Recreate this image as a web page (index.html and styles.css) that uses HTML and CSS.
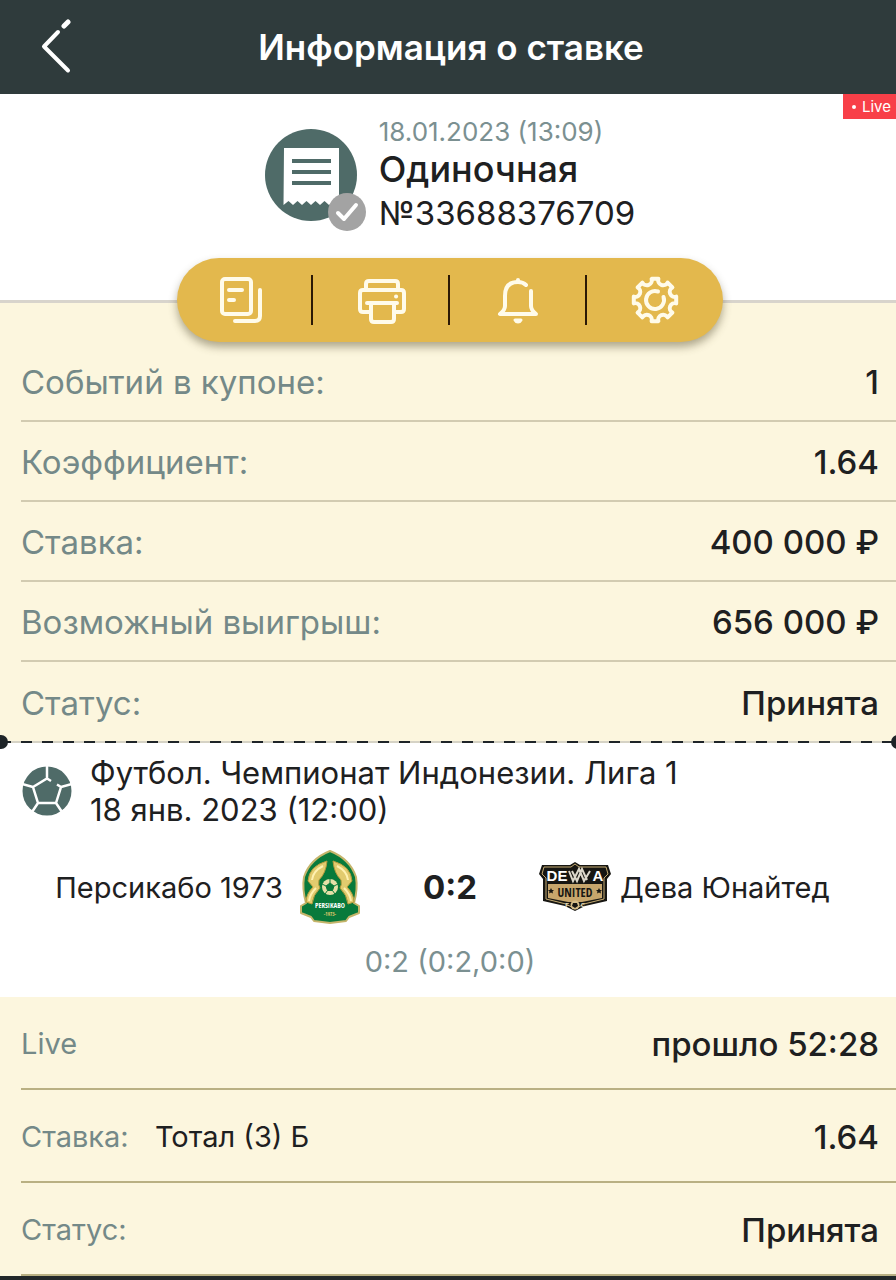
FILE: index.html
```html
<!DOCTYPE html>
<html lang="ru">
<head>
<meta charset="utf-8">
<meta name="viewport" content="width=device-width, initial-scale=1">
<title>Информация о ставке</title>
<link rel="stylesheet" href="styles.css">
</head>
<body>
<header class="topbar">
  <button class="back" type="button" aria-label="Назад">
    <svg width="32" height="56" viewBox="0 0 32 56" fill="none" stroke="#fff" stroke-width="4" stroke-linecap="round" stroke-linejoin="round"><path d="M28 3l-4 4" stroke-width="5"/><path d="M18 13L4 27.500l24 24"/></svg>
  </button>
  <h1 class="topbar-title">Информация о ставке</h1>
  <span class="topbar-side"></span>
</header>

<main>
  <section class="summary">
    <span class="live-tag"><i class="live-dot"></i>Live</span>
    <div class="ticket">
      <svg class="ticket-icon" width="102" height="102" viewBox="0 0 102 102">
        <circle cx="46" cy="46" r="46" fill="#4f6b68"/>
        <path d="M19 19h55v58l-5-5-5 4-4.500-4-4.500 4-4.500-4-4.500 4-4.500-4-4.500 4-4.500-4-4.500 4-4.500-4-5 4z" fill="#fff"/>
        <path d="M27 32h39M27 43h39M27 54h39" stroke="#4f6b68" stroke-width="4"/>
        <circle cx="82" cy="83" r="19" fill="#a3a3a3"/>
        <path d="M73 84l6 6 12-14" fill="none" stroke="#fff" stroke-width="4" stroke-linecap="round" stroke-linejoin="round"/>
      </svg>
      <div class="ticket-text">
        <time class="ticket-date">18.01.2023 (13:09)</time>
        <h2 class="ticket-type">Одиночная</h2>
        <p class="ticket-number">№33688376709</p>
      </div>
    </div>
    <div class="actions">
      <button class="action" type="button" aria-label="Копировать">
        <svg width="48" height="48" viewBox="4 0 48 48" overflow="visible" fill="none" stroke="#fffbea" stroke-width="4" stroke-linecap="round" stroke-linejoin="round"><rect x="5" y="3" width="29" height="35" rx="3"/><path d="M12 14h13M12 24h5"/><path d="M43 14v26q0 5-5 5H18"/></svg>
      </button>
      <button class="action" type="button" aria-label="Печать">
        <svg width="48" height="48" viewBox="0 0 48 48" fill="none" stroke="#fffbea" stroke-width="4" stroke-linecap="round" stroke-linejoin="round"><path d="M8 14V8q0-3 3-3h26q3 0 3 3v6"/><path d="M12 36H5q-3 0-3-3V17q0-3 3-3h38q3 0 3 3v16q0 3-3 3h-7"/><path d="M9 27h30M13 27v16q0 3 3 3h17q3 0 3-3V27"/><path d="M38 20.500h.1"/></svg>
      </button>
      <button class="action" type="button" aria-label="Уведомления">
        <svg width="48" height="48" viewBox="0 0 48 48" fill="none" stroke="#fffbea" stroke-width="4" stroke-linecap="round" stroke-linejoin="round"><path d="M32 9Q29 6 24 6 11 6 11 20v10q0 4-5 8h36q-5-4-5-8V15"/><path d="M24 6V4"/><path d="M21 44h6q-1 2-3 2t-3-2z" stroke-width="3"/></svg>
      </button>
      <button class="action" type="button" aria-label="Настройки">
        <svg width="48" height="48" viewBox="-24 -24 48 48" fill="none" stroke="#fffbea" stroke-width="4" stroke-linecap="round" stroke-linejoin="round"><path d="M-3.400-21.200H3.400A5 5 0 0 0 12.600-17.400L17.400-12.600A5 5 0 0 0 21.200-3.400V3.400A5 5 0 0 0 17.400 12.600L12.600 17.400A5 5 0 0 0 3.400 21.200H-3.400A5 5 0 0 0-12.600 17.400L-17.400 12.600A5 5 0 0 0-21.200 3.400V-3.400A5 5 0 0 0-17.400-12.600L-12.600-17.400A5 5 0 0 0-3.400-21.200z"/><path d="M3-8.500A9 9 0 1 0 8.500-3"/></svg>
      </button>
    </div>
  </section>

  <dl class="details">
    <div class="row"><dt>Событий в купоне:</dt><dd>1</dd></div>
    <div class="row"><dt>Коэффициент:</dt><dd>1.64</dd></div>
    <div class="row"><dt>Ставка:</dt><dd>400 000 ₽</dd></div>
    <div class="row"><dt>Возможный выигрыш:</dt><dd>656 000 ₽</dd></div>
    <div class="row"><dt>Статус:</dt><dd>Принята</dd></div>
  </dl>

  <div class="tear"></div>

  <section class="event">
    <div class="event-head">
      <svg class="ball" width="50" height="50" viewBox="0 0 50 50">
        <circle cx="25" cy="25" r="24.500" fill="#4f6b68"/>
        <path d="M25 0v13M11 21L0 18M39 21l11-3M16 37l-6 9M34 37l6 9M29 15l-4-2.500L11 21l5 16h18l5-16-4-2.500" fill="none" stroke="#fff" stroke-width="2.500"/>
      </svg>
      <div class="event-text">
        <p>Футбол. Чемпионат Индонезии. Лига 1</p>
        <p>18 янв. 2023 (12:00)</p>
      </div>
    </div>
    <div class="match">
      <div class="team team-home">
        <span>Персикабо 1973</span>
        <svg width="64" height="76" viewBox="0 0 64 76">
          <path d="M32 2Q52 10 58 28q2 12-2 26l5 3v7l-10 4-3 4-16 2-16-2-3-4-10-4v-7l5-3Q4 40 6 28 12 10 32 2z" fill="#087a3b" stroke="#c5b56b" stroke-width="2" stroke-linejoin="round"/>
          <path d="M29 12Q11 17 10 32l5 6q-7 7-7 15l6 2q1-9 8-16-2-3-1-8 7-7 8-19z" fill="#e2cb6e" stroke="#b59b3d"/>
          <path d="M35 12q18 5 19 20l-5 6q7 7 7 15l-6 2q-1-9-8-16 2-3 1-8-7-7-8-19z" fill="#e2cb6e" stroke="#b59b3d"/>
          <path d="M14 31q1-9 11-14M50 31q-1-9-11-14M11 52q1-7 7-13M53 52q-1-7-7-13" fill="none" stroke="#fff1b0" stroke-width="2"/>
          <circle cx="32" cy="38" r="8" fill="#e5e0a8"/>
          <path d="M32 34l4 3-1.500 4.500h-5L28 37zM32 30v4M36 37l4-2M34.500 41.500L37 45M29.500 41.500L27 45M28 37l-4-2" fill="#087a3b" stroke="#087a3b"/>
          <text class="logo-text" x="32" y="59" font-size="7" fill="#fff">PERSIKABO</text>
          <text class="logo-text" x="32" y="67" font-size="5" fill="#e2cb6e">-1973-</text>
        </svg>
      </div>
      <strong class="score">0:2</strong>
      <div class="team team-away">
        <svg width="74" height="50" viewBox="0 0 74 50">
          <path d="M4 3h28l5-3 5 3h28l3 9-4 5v22l-22 5-10 5-10-5-22-5V17l-4-5z" fill="#171612"/>
          <path d="M6 5h27l4-3 4 3h27l2 7-4 4v21l-20 5-9 5-9-5-20-5V16l-4-4z" fill="none" stroke="#c5ab72"/>
          <path d="M10 22h54v14l-20 4H30l-20-4z" fill="#c7a66c"/>
          <text class="logo-wide" x="19" y="19" font-size="15" fill="#fff">DE</text>
          <text class="logo-wide" x="60" y="19" font-size="15" fill="#fff">A</text>
          <path d="M31 9l4 10 6-12 5 12 6-10M34 9l5 10 5-12 5 11" fill="none" stroke="#ddd8cb" stroke-width="2"/>
          <text class="logo-text" x="37" y="35" font-size="12" fill="#171612">UNITED</text>
          <path d="M13 26l1 2h2l-1.500 1.500.5 2-2-1-2 1 .5-2L10 28h2zM61 26l1 2h2l-1.500 1.500.5 2-2-1-2 1 .5-2L58 28h2z" fill="#171612"/>
          <circle cx="37" cy="43" r="4.500" fill="#d5bd89"/><path d="M35 41h4l1 3-3 2-3-2z" fill="#171612"/>
          <text class="logo-wide" x="29" y="45" font-size="6" fill="#f0e5c9">F</text>
          <text class="logo-wide" x="45" y="45" font-size="6" fill="#f0e5c9">C</text>
        </svg>
        <span>Дева Юнайтед</span>
      </div>
    </div>
    <p class="periods">0:2 (0:2,0:0)</p>
  </section>

  <dl class="bet">
    <div class="row"><dt>Live</dt><dd>прошло 52:28</dd></div>
    <div class="row"><dt>Ставка: <span class="pick">Тотал (3) Б</span></dt><dd>1.64</dd></div>
    <div class="row"><dt>Статус:</dt><dd>Принята</dd></div>
  </dl>
</main>
<footer class="bottom-bar"></footer>
</body>
</html>
```

FILE: styles.css
```css
* {
  box-sizing: border-box;
}

body {
  margin: 0;
  background: #fff;
  color: #1e2021;
  font-family: Inter, "Liberation Sans", sans-serif;
  overflow-x: hidden;
}

h1, h2, p, dl, dd {
  margin: 0;
}

button {
  padding: 0;
  border: 0;
  background: none;
  cursor: pointer;
}

svg {
  display: block;
  flex: none;
}

.topbar {
  display: grid;
  grid-template-columns: 60px 1fr 60px;
  align-items: center;
  height: 94px;
  padding: 0 20px 0 26px;
  background: #2f3b3c;
  color: #fff;
}

.back {
  display: grid;
  place-items: center;
  height: 60px;
}

.topbar-title {
  font-size: 35px;
  font-weight: 600;
  line-height: 44px;
  text-align: center;
}

.summary {
  position: relative;
  padding-top: 23px;
  border-bottom: 3px solid #d8d4cc;
}

.live-tag {
  position: absolute;
  top: 0;
  right: 0;
  display: flex;
  align-items: center;
  gap: 6px;
  height: 25px;
  padding: 0 5px 0 9px;
  background: #f83f48;
  color: #fff;
  font-size: 15px;
}

.live-dot {
  width: 4px;
  height: 4px;
  border-radius: 50%;
  background: #fff;
}

.ticket {
  display: flex;
  justify-content: center;
  gap: 12px;
  padding-left: 4px;
}

.ticket-icon {
  margin-top: 12px;
}

.ticket-date {
  display: block;
  color: #7b9091;
  font-size: 26px;
  line-height: 30px;
}

.ticket-type {
  font-size: 36px;
  font-weight: 500;
  line-height: 44px;
}

.ticket-number {
  font-size: 33px;
  line-height: 44px;
}

.actions {
  position: relative;
  display: grid;
  grid-template-columns: repeat(4, 1fr);
  width: 61%;
  margin: 23px auto -42px;
  left: 2px;
  border-radius: 42px;
  background: #e3b84d;
  box-shadow: 0 5px 8px rgba(80, 70, 40, 0.45);
}

.action {
  position: relative;
  display: grid;
  place-items: center;
  height: 84px;
}

.action + .action::before {
  content: "";
  position: absolute;
  top: 17px;
  bottom: 17px;
  left: -2px;
  width: 2px;
  background: #2b1905;
}

.details {
  padding-top: 39px;
  background: #fcf6de;
}

.row {
  display: flex;
  align-items: center;
  justify-content: space-between;
  height: 80px;
  margin-left: 21px;
  padding: 2px 17px 0 0;
  border-bottom: 2px solid #d2cbb1;
}

.details .row:last-child {
  border-bottom: 0;
}

.row dt {
  color: #748988;
  font-size: 33px;
}

.row dd {
  font-size: 33px;
  font-weight: 500;
}

.tear {
  position: relative;
  height: 2px;
  margin-top: -1px;
  background: repeating-linear-gradient(90deg, #1e2428 0 11px, #d6d3c5 11px 21px);
}

.tear::before,
.tear::after {
  content: "";
  position: absolute;
  top: -6px;
  width: 14px;
  height: 14px;
  border-radius: 50%;
  background: #1e2428;
}

.tear::before {
  left: -6px;
}

.tear::after {
  right: -9px;
}

.event {
  padding: 11px 17px 17px 21px;
}

.event-head {
  display: flex;
  align-items: center;
  gap: 18px;
  font-size: 31px;
  line-height: 37px;
}

.ball {
  margin-left: 1px;
}

.match {
  display: grid;
  grid-template-columns: 1fr 176px 1fr;
  align-items: center;
  margin-top: 21px;
}

.team {
  display: flex;
  align-items: center;
  gap: 8px;
  font-size: 29px;
  white-space: nowrap;
}

.team-home {
  justify-content: flex-end;
  gap: 15px;
}

.score {
  font-size: 33px;
  font-weight: 700;
  text-align: center;
}

.logo-text,
.logo-wide {
  font-family: "Open Sans Condensed", "Roboto Condensed", Roboto, sans-serif;
  font-weight: 700;
  text-anchor: middle;
}

.logo-wide {
  font-family: "Liberation Sans", sans-serif;
}

.periods {
  margin-top: 19px;
  color: #7b9091;
  font-size: 29px;
  line-height: 36px;
  text-align: center;
}

.bet {
  background: #fcf6de;
}

.bet .row {
  height: 93px;
  border-color: #b9b083;
}

.bet .row dt {
  font-size: 29px;
}

.pick {
  margin-left: 18px;
  color: #1e2021;
}

.bottom-bar {
  height: 5px;
  background: #22282a;
}
```
